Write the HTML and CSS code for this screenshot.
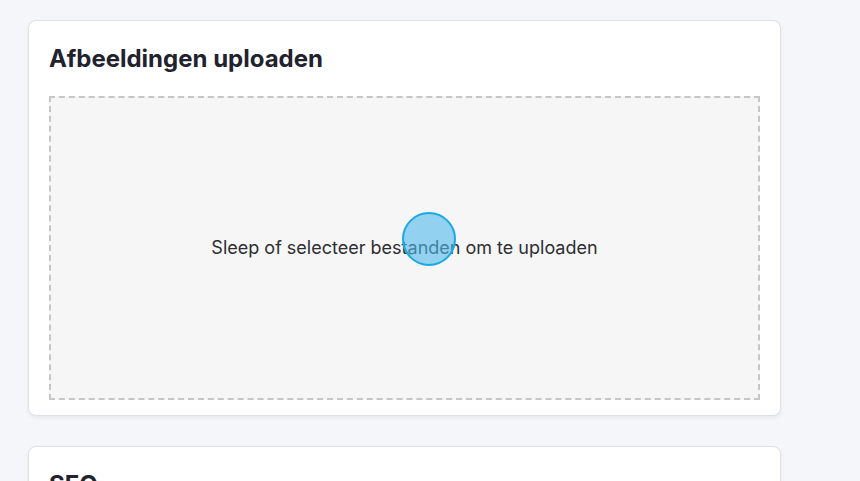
FILE: index.html
```html
<!DOCTYPE html>
<html>
<head>
<meta charset="utf-8">
<link rel="stylesheet" href="styles.css">
</head>
<body>
<main class="page">
  <section class="card">
    <h2 class="card-title">Afbeeldingen uploaden</h2>
    <div class="dropzone">
      <span class="dropzone-text">Sleep of selecteer bestanden om te uploaden</span>
      <span class="cursor-dot"></span>
    </div>
  </section>
  <section class="card">
    <h2 class="card-title">SEO</h2>
  </section>
</main>
</body>
</html>
```
FILE: styles.css
```css
html, body {
  margin: 0;
  padding: 0;
  background: #f5f6fa;
  font-family: Inter, "Noto Sans", sans-serif;
  color: #222230;
  overflow: hidden;
  height: 481px;
}
.page {
  display: flex;
  flex-direction: column;
  gap: 30px;
  padding: 20px 0 0 28px;
  width: 753px;
}
.card {
  background: #fff;
  border: 1px solid #dfe0e6;
  border-radius: 8px;
  box-shadow: 0 2px 4px rgba(20, 20, 40, 0.06);
  padding: 20px 20px 15px 20px;
}
.card-title {
  margin: 0;
  font-size: 24px;
  font-weight: 700;
  line-height: 33px;
  color: #22222f;
  padding-top: 1px;
}
.dropzone {
  position: relative;
  margin-top: 21px;
  height: 300px;
  border: 2px dashed #c6c6c6;
  background: #f6f6f6;
  display: flex;
  align-items: center;
  justify-content: center;
}
.dropzone-text {
  font-size: 18px;
  color: #2e2e33;
  margin-bottom: 1px;
}
.cursor-dot {
  position: absolute;
  left: 351px;
  top: 114px;
  width: 50px;
  height: 50px;
  border-radius: 50%;
  background: rgba(80, 185, 235, 0.6);
  border: 2px solid #1aa9e3;
}
```
